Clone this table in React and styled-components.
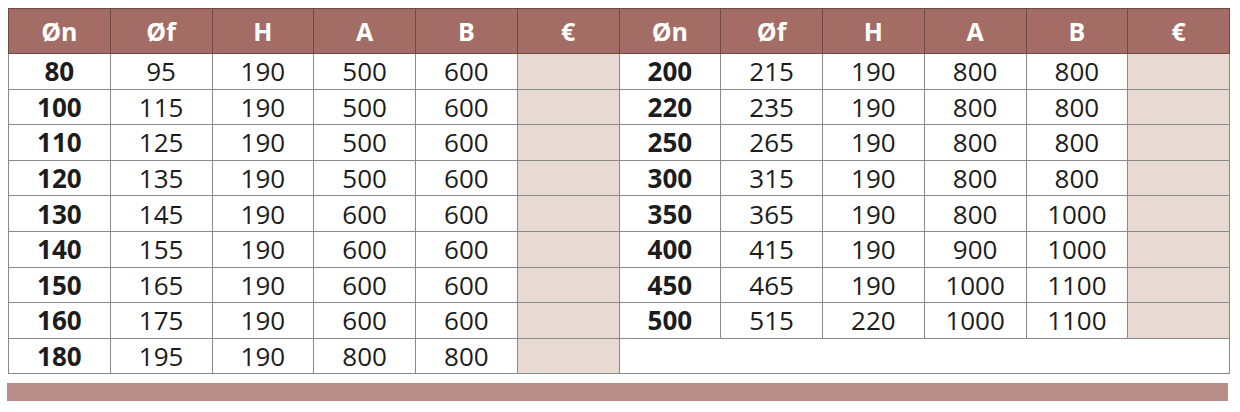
import styled, { createGlobalStyle } from 'styled-components'

const GlobalStyle = createGlobalStyle`
body {
  margin: 0;
  background: #fff;
  font-family: "Open Sans", "Noto Sans", sans-serif;
}
`;

const Page = styled.div`
  padding: 8px 8px 0 8px;
  width: 1222px;
`;

const Table = styled.table`
  width: 1222px;
  border-collapse: collapse;
  table-layout: fixed;
  border: 1px solid #c8c8c8;
`;

const HeadCell = styled.th`
  height: 44px;
  padding: 0;
  background: #a36d66;
  color: #fff;
  font-size: 25px;
  font-weight: 700;
  text-align: center;
  border: 1px solid #6f4a45;
  line-height: 1;
`;

const Cell = styled.td`
  height: 34.6px;
  padding: 0;
  text-align: center;
  font-size: 26px;
  color: #1c1c1c;
  font-weight: ${props => (props.bold ? 700 : 400)};
  background: ${props => (props.price ? '#e8dad3' : '#fff')};
  border: 1px solid #8a8a8a;
  line-height: 1;
`;

const EmptyCell = styled.td`
  border: 1px solid #8a8a8a;
  background: #fff;
`;

const Bar = styled.div`
  margin: 9px 0 0 -1px;
  width: 1221px;
  height: 18px;
  background: #b88f88;
`;

const heads = ['Øn', 'Øf', 'H', 'A', 'B', '€']

const left = [
  [80, 95, 190, 500, 600],
  [100, 115, 190, 500, 600],
  [110, 125, 190, 500, 600],
  [120, 135, 190, 500, 600],
  [130, 145, 190, 600, 600],
  [140, 155, 190, 600, 600],
  [150, 165, 190, 600, 600],
  [160, 175, 190, 600, 600],
  [180, 195, 190, 800, 800],
]

const right = [
  [200, 215, 190, 800, 800],
  [220, 235, 190, 800, 800],
  [250, 265, 190, 800, 800],
  [300, 315, 190, 800, 800],
  [350, 365, 190, 800, 1000],
  [400, 415, 190, 900, 1000],
  [450, 465, 190, 1000, 1100],
  [500, 515, 220, 1000, 1100],
]

function Half({ row }) {
  return (
    <>
      {row.map((v, i) => (
        <Cell key={i} bold={i === 0}>{v}</Cell>
      ))}
      <Cell price />
    </>
  )
}

export default function App() {
  return (
    <Page>
      <GlobalStyle />
      <Table>
        <thead>
          <tr>
            {[...heads, ...heads].map((h, i) => (
              <HeadCell key={i}>{h}</HeadCell>
            ))}
          </tr>
        </thead>
        <tbody>
          {left.map((row, i) => (
            <tr key={i}>
              <Half row={row} />
              {right[i] ? <Half row={right[i]} /> : <EmptyCell colSpan={6} />}
            </tr>
          ))}
        </tbody>
      </Table>
      <Bar />
    </Page>
  )
}
